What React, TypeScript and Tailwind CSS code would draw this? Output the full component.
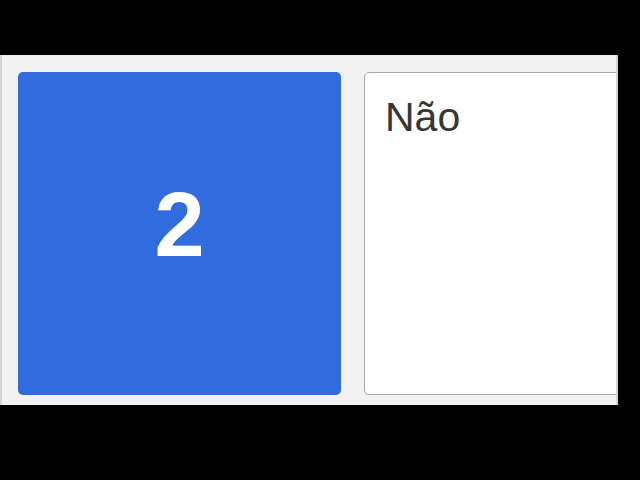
import React from 'react';

export default function App() {
  return (
    <div className="w-[640px] h-[480px] bg-black pt-[55px] overflow-hidden" style={{ fontFamily: '"Liberation Sans", Arial, sans-serif' }}>
      <div className="w-[618px] h-[350px] bg-[#f2f2f2] border-x-2 border-[#d4d4d4] overflow-hidden flex items-start gap-[23px] pl-[16px] pt-[17px]">
        {/* number tile */}
        <div className="w-[323px] h-[323px] shrink-0 rounded-[5px] bg-[#306cde] flex items-center justify-center pb-[18px]">
          <span className="text-white font-bold text-[90px] leading-none">2</span>
        </div>

        {/* answer card */}
        <div className="w-[300px] h-[323px] shrink-0 rounded-[5px] bg-white border border-[#a8a8a8] pl-[20px] pt-[21px]">
          <p className="text-[#363636] text-[41px] leading-[47px]">Não</p>
        </div>
      </div>
    </div>
  );
}
